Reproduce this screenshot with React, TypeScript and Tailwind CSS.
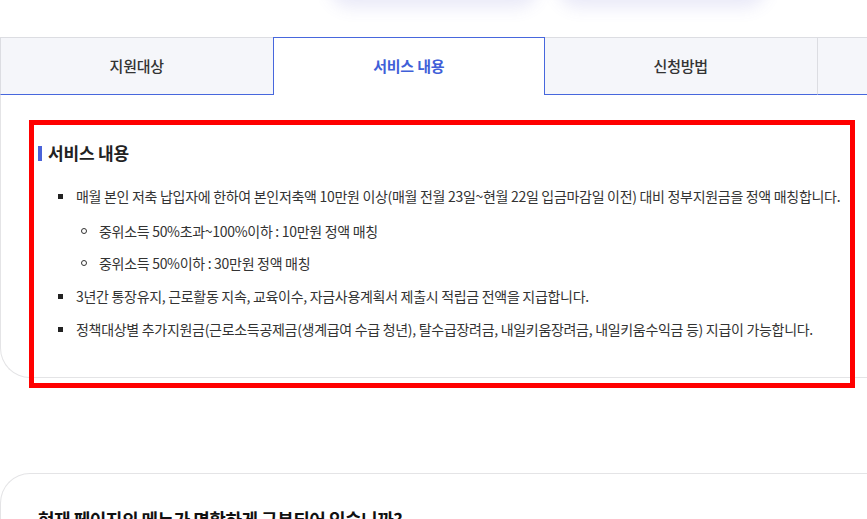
import React from "react";

const tabs = ["지원대상", "서비스 내용", "신청방법", "문의처"];

const App = () => {
  const active = 1;

  return (
    <div className="h-[519px] w-full overflow-hidden bg-white font-['Noto_Sans_CJK_KR','Noto_Sans',sans-serif] text-[#333]">
      <div className="w-[1090px]">
        {/* buttons above the fold, only their shadows show */}
        <div className="flex h-[37px] justify-center gap-[18px] pl-[6px]">
          <div className="-mt-[44px] h-[44px] w-[210px] rounded-full bg-white shadow-[0_8px_16px_rgba(90,90,200,0.13)]" />
          <div className="-mt-[44px] h-[44px] w-[210px] rounded-full bg-white shadow-[0_8px_16px_rgba(90,90,200,0.13)]" />
        </div>

        <div className="grid grid-cols-4">
          {tabs.map((tab, i) =>
            i === active ? (
              <div
                key={tab}
                className="flex h-[58px] items-center justify-center border-x border-t border-[#4767dd] bg-white text-[15px] font-bold tracking-[-0.2px] text-[#3f5fd8]"
              >
                {tab}
              </div>
            ) : (
              <div
                key={tab}
                className={`flex h-[58px] items-center justify-center border-t border-b border-t-[#dcdde2] border-b-[#4767dd] bg-[#f5f6fa] text-[15px] font-medium tracking-[-0.2px] text-[#333] ${
                  i === 0 ? "border-l border-l-[#dcdde2]" : ""
                } ${i === 2 ? "border-r border-r-[#dcdde2]" : ""}`}
              >
                {tab}
              </div>
            )
          )}
        </div>

        <div className="relative rounded-bl-[30px] border-b border-l border-[#e4e4e6] pb-[36px] pl-[37px] pt-[46px]">
          <h3 className="flex items-center gap-[6px] text-[17px] font-bold leading-[24px] tracking-[-0.2px] text-[#222]">
            <span className="h-[15px] w-[4px] bg-[#4a63d9]" />
            서비스 내용
          </h3>

          <ul className="mt-[19px] space-y-[9px] pl-[20px] text-[14px] leading-[24px] tracking-[-0.3px]">
            <li className="flex gap-[13px]">
              <span className="mt-[10px] h-[5px] w-[5px] shrink-0 bg-[#222]" />
              <div>
                매월 본인 저축 납입자에 한하여 본인저축액 10만원 이상(매월 전월 23일~현월 22일 입금마감일 이전) 대비 정부지원금을 정액 매칭합니다.
                <ul className="mt-[11px] space-y-[8px] pl-[5px]">
                  <li className="flex items-center gap-[12px]">
                    <span className="h-[6px] w-[6px] shrink-0 rounded-full border border-[#333]" />
                    <span>중위소득 50%초과~100%이하 : 10만원 정액 매칭</span>
                  </li>
                  <li className="flex items-center gap-[12px]">
                    <span className="h-[6px] w-[6px] shrink-0 rounded-full border border-[#333]" />
                    <span>중위소득 50%이하 : 30만원 정액 매칭</span>
                  </li>
                </ul>
              </div>
            </li>
            <li className="flex gap-[13px]">
              <span className="mt-[10px] h-[5px] w-[5px] shrink-0 bg-[#222]" />
              3년간 통장유지, 근로활동 지속, 교육이수, 자금사용계획서 제출시 적립금 전액을 지급합니다.
            </li>
            <li className="flex gap-[13px]">
              <span className="mt-[10px] h-[5px] w-[5px] shrink-0 bg-[#222]" />
              정책대상별 추가지원금(근로소득공제금(생계급여 수급 청년), 탈수급장려금, 내일키움장려금, 내일키움수익금 등) 지급이 가능합니다.
            </li>
          </ul>

          {/* red highlight annotation */}
          <div className="pointer-events-none absolute left-[28px] top-[25px] h-[268px] w-[826px] border-[5px] border-[#ff0000]" />
        </div>

        <div className="mt-[95px] rounded-tl-[30px] border-l border-t border-[#e4e4e6] pl-[37px] pt-[32px]">
          <p className="text-[18px] font-bold leading-[26px] tracking-[-0.5px] text-[#111]">
            현재 페이지의 메뉴가 명확하게 구분되어 있습니까?
          </p>
        </div>
      </div>
    </div>
  );
};

export default App;
